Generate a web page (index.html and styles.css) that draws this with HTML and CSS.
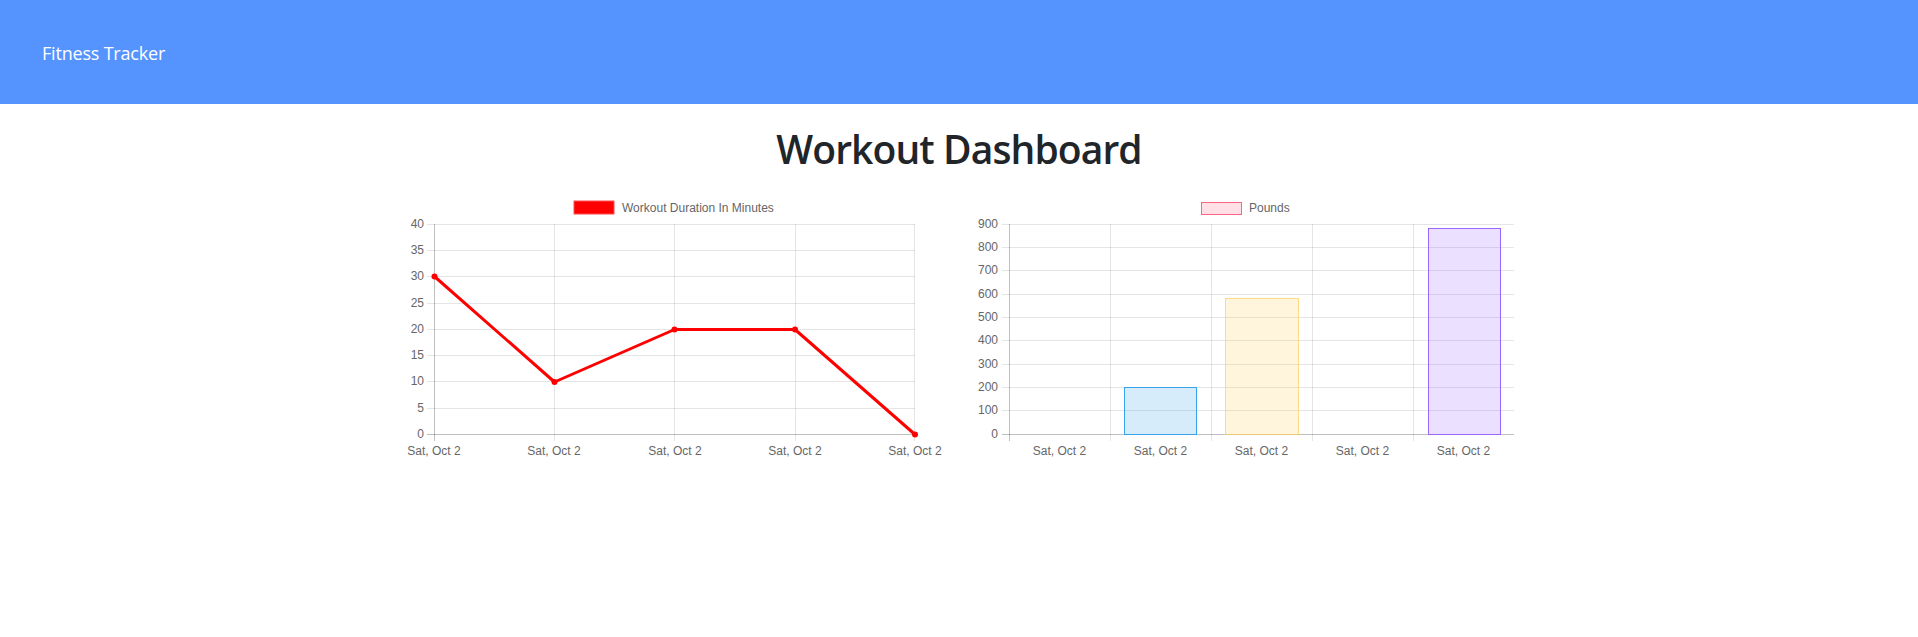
FILE: index.html
```html
<!DOCTYPE html>
<html lang="en">
<head>
<meta charset="utf-8">
<title>Fitness Tracker</title>
<link rel="stylesheet" href="styles.css">
</head>
<body>
<nav class="navbar">
  <a class="brand" href="#">Fitness Tracker</a>
</nav>
<main class="container">
  <h1 class="page-title">Workout Dashboard</h1>
  <div class="row">
    <div class="col">
      <svg class="chart" width="540" height="270" viewBox="0 0 540 270">
        <rect x="170" y="10" width="40" height="13" fill="#ff0000" stroke="#ff4d4d" stroke-width="1"/>
        <text class="legend" x="218" y="21">Workout Duration In Minutes</text>
        <g class="grid">
          <line x1="23" y1="33.5" x2="511" y2="33.5"/>
          <line x1="23" y1="59.5" x2="511" y2="59.5"/>
          <line x1="23" y1="85.5" x2="511" y2="85.5"/>
          <line x1="23" y1="112.5" x2="511" y2="112.5"/>
          <line x1="23" y1="138.5" x2="511" y2="138.5"/>
          <line x1="23" y1="164.5" x2="511" y2="164.5"/>
          <line x1="23" y1="190.5" x2="511" y2="190.5"/>
          <line x1="23" y1="217.5" x2="511" y2="217.5"/>
          <line x1="150.5" y1="33" x2="150.5" y2="250"/>
          <line x1="270.5" y1="33" x2="270.5" y2="250"/>
          <line x1="391.5" y1="33" x2="391.5" y2="250"/>
          <line x1="510.5" y1="33" x2="510.5" y2="250"/>
        </g>
        <g class="axis">
          <line x1="30.5" y1="33" x2="30.5" y2="250"/>
          <line x1="23" y1="243.5" x2="511" y2="243.5"/>
        </g>
        <g class="ylabels">
          <text x="20" y="37">40</text>
          <text x="20" y="63">35</text>
          <text x="20" y="89">30</text>
          <text x="20" y="116">25</text>
          <text x="20" y="142">20</text>
          <text x="20" y="168">15</text>
          <text x="20" y="194">10</text>
          <text x="20" y="221">5</text>
          <text x="20" y="247">0</text>
        </g>
        <g class="xlabels">
          <text x="30" y="264">Sat, Oct 2</text>
          <text x="150" y="264">Sat, Oct 2</text>
          <text x="271" y="264">Sat, Oct 2</text>
          <text x="391" y="264">Sat, Oct 2</text>
          <text x="511" y="264">Sat, Oct 2</text>
        </g>
        <polyline class="line" points="30.5,85.5 150.5,191 270.5,138.5 391,138.5 511,243.5"/>
        <g class="points">
          <circle cx="30.5" cy="85.5" r="3"/>
          <circle cx="150.5" cy="191" r="3"/>
          <circle cx="270.5" cy="138.5" r="3"/>
          <circle cx="391" cy="138.5" r="3"/>
          <circle cx="511" cy="243.5" r="3"/>
        </g>
      </svg>
    </div>
    <div class="col">
      <svg class="chart" width="540" height="270" viewBox="0 0 540 270">
        <rect x="227.5" y="11.5" width="40" height="12" fill="rgba(255,99,132,0.2)" stroke="rgb(255,99,132)" stroke-width="1"/>
        <text class="legend" x="275" y="21">Pounds</text>
        <g class="grid">
          <line x1="28" y1="33.5" x2="540" y2="33.5"/>
          <line x1="28" y1="56.5" x2="540" y2="56.5"/>
          <line x1="28" y1="79.5" x2="540" y2="79.5"/>
          <line x1="28" y1="103.5" x2="540" y2="103.5"/>
          <line x1="28" y1="126.5" x2="540" y2="126.5"/>
          <line x1="28" y1="149.5" x2="540" y2="149.5"/>
          <line x1="28" y1="173.5" x2="540" y2="173.5"/>
          <line x1="28" y1="196.5" x2="540" y2="196.5"/>
          <line x1="28" y1="219.5" x2="540" y2="219.5"/>
          <line x1="136.5" y1="33" x2="136.5" y2="250"/>
          <line x1="237.5" y1="33" x2="237.5" y2="250"/>
          <line x1="338.5" y1="33" x2="338.5" y2="250"/>
          <line x1="439.5" y1="33" x2="439.5" y2="250"/>
        </g>
        <g class="axis">
          <line x1="35.5" y1="33" x2="35.5" y2="250"/>
          <line x1="28" y1="243.5" x2="540" y2="243.5"/>
        </g>
        <rect x="150.5" y="196.5" width="72" height="47" fill="rgba(54,162,235,0.2)" stroke="rgb(54,162,235)" stroke-width="1"/>
        <rect x="251.5" y="107.5" width="73" height="136" fill="rgba(255,206,86,0.2)" stroke="rgba(255,206,86,0.7)" stroke-width="1"/>
        <rect x="454.5" y="37.5" width="72" height="206" fill="rgba(153,102,255,0.2)" stroke="rgb(153,102,255)" stroke-width="1"/>
        <g class="ylabels">
          <text x="24" y="37">900</text>
          <text x="24" y="60">800</text>
          <text x="24" y="83">700</text>
          <text x="24" y="107">600</text>
          <text x="24" y="130">500</text>
          <text x="24" y="153">400</text>
          <text x="24" y="177">300</text>
          <text x="24" y="200">200</text>
          <text x="24" y="223">100</text>
          <text x="24" y="247">0</text>
        </g>
        <g class="xlabels">
          <text x="85.5" y="264">Sat, Oct 2</text>
          <text x="186.5" y="264">Sat, Oct 2</text>
          <text x="287.5" y="264">Sat, Oct 2</text>
          <text x="388.5" y="264">Sat, Oct 2</text>
          <text x="489.5" y="264">Sat, Oct 2</text>
        </g>
      </svg>
    </div>
  </div>
</main>
</body>
</html>
```

FILE: styles.css
```css
* { box-sizing: border-box; }

body {
  margin: 0;
  font-family: "Open Sans", "Noto Sans", sans-serif;
  color: #212529;
  background: #fff;
}

.navbar {
  height: 104px;
  background: #5593ff;
  display: flex;
  align-items: center;
  padding: 0 42px;
}

.brand {
  color: #fff;
  text-decoration: none;
  font-size: 18px;
  font-weight: 400;
  letter-spacing: -0.2px;
  line-height: 1;
  padding-top: 2px;
}

.container {
  width: 1140px;
  margin: 0 auto;
  padding: 0 15px;
}

.page-title {
  margin: 20px 0 17px;
  text-align: center;
  font-size: 39px;
  font-weight: 600;
  line-height: 50px;
  letter-spacing: -0.9px;
}

.row {
  display: flex;
  margin: 0 -15px;
}

.col {
  flex: 0 0 50%;
  padding: 0 15px;
}

.chart {
  display: block;
  font-family: "Liberation Sans", Arial, sans-serif;
  font-size: 12px;
}

.legend { fill: #666; }

.grid line { stroke: rgba(0, 0, 0, 0.1); stroke-width: 1; }
.axis line { stroke: rgba(0, 0, 0, 0.25); stroke-width: 1; }

.ylabels text { fill: #666; text-anchor: end; }
.xlabels text { fill: #666; text-anchor: middle; }

.line {
  fill: none;
  stroke: #ff0000;
  stroke-width: 3;
  stroke-linejoin: round;
}

.points circle { fill: #ff0000; }
```
